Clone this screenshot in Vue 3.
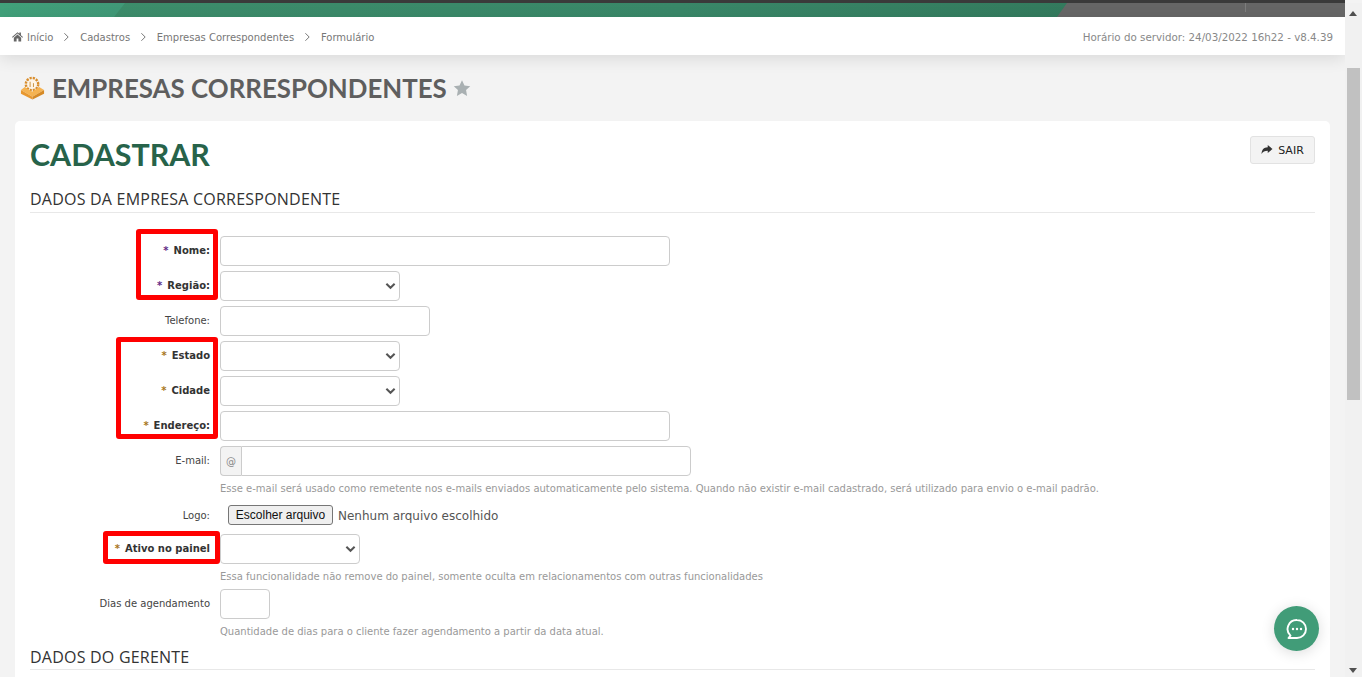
<script setup>
const fields1 = [
  { label: 'Nome:', req: true, star: '#5f2a86', type: 'text', w: 450 },
  { label: 'Região:', req: true, star: '#5f2a86', type: 'select', w: 180 },
  { label: 'Telefone:', type: 'text', w: 210 },
  { label: 'Estado', req: true, star: '#a87520', type: 'select', w: 180 },
  { label: 'Cidade', req: true, star: '#a87520', type: 'select', w: 180 },
  { label: 'Endereço:', req: true, star: '#a87520', type: 'text', w: 450 }
]
const crumbs = ['Cadastros', 'Empresas Correspondentes', 'Formulário']
</script>

<template>
  <div class="shell">
    <div class="main">
      <div class="topbar">
        <div class="band">
          <span class="seg-light"></span>
          <span class="seg-gray"><i class="tick"></i></span>
        </div>
      </div>
      <nav class="crumbbar">
        <div class="crumbs">
          <svg class="home" viewBox="0 0 24 24"><path d="M12 2.500 0 13l1.500 1.700L12 5.500l10.500 9.200L24 13l-4.500-3.900V3.500h-3.500v2.600zM4 14.500V23h6v-6.500h4V23h6v-8.500L12 7.800z" /></svg>
          <span>Início</span>
          <template v-for="c in crumbs" :key="c">
            <svg class="chev" viewBox="0 0 8 12"><path d="M1.500 1.500 6 6l-4.500 4.500" /></svg>
            <span>{{ c }}</span>
          </template>
        </div>
        <div class="server">Horário do servidor: 24/03/2022 16h22 - v8.4.39</div>
      </nav>

      <header class="pagehead">
        <svg class="logo" viewBox="0 0 26 24">
          <circle cx="12.500" cy="8" r="6.300" fill="none" stroke="#d98d2b" stroke-width="2.800" stroke-dasharray="2.200 1.100" />
          <circle cx="12.500" cy="8" r="5" fill="#fff5e6" />
          <path d="M10.500 5.500V11M14 7v4" stroke="#c9923f" stroke-width="1" fill="none" />
          <path fill="#f5b352" d="M1 14 5 11 12.500 16 20 11 25 14 13 21z" />
          <path fill="#e8982f" d="M1 14v4l12 6v-3z" />
          <path fill="#d68a26" d="M25 14v4l-12 6v-3z" />
        </svg>
        <h1>EMPRESAS CORRESPONDENTES</h1>
        <svg class="star" viewBox="0 0 24 24"><path d="m12 1.500 3.300 7 7.700 1-5.600 5.300 1.400 7.700-6.800-3.700-6.800 3.700 1.400-7.700L1 9.500l7.700-1z" /></svg>
      </header>

      <section class="card">
        <div class="cardhead">
          <h2>CADASTRAR</h2>
          <button class="exit" type="button">
            <svg viewBox="0 0 24 24"><path d="M23 10 13.500 2v4.600C5.500 6.800 1.500 11.500 1 20c2.700-5 6.500-6.500 12.500-6.500V18z" /></svg>
            SAIR
          </button>
        </div>
        <h3 class="section">DADOS DA EMPRESA CORRESPONDENTE</h3>

        <form class="form">
          <div v-for="f in fields1" :key="f.label" class="row">
            <label :class="{ req: f.req }"><span v-if="f.req" class="ast" :style="{ color: f.star }">* </span>{{ f.label }}</label>
            <div v-if="f.type === 'select'" class="ctl select" :style="{ width: f.w + 'px' }">
              <svg viewBox="0 0 12 8"><path d="M1.500 1.500 6 6l4.500-4.500" /></svg>
            </div>
            <input v-else class="ctl" type="text" :style="{ width: f.w + 'px' }" />
          </div>

          <div class="row email">
            <label>E-mail:</label>
            <div class="group">
              <span class="addon">@</span>
              <input class="ctl" type="text" />
            </div>
          </div>
          <p class="help h1">Esse e-mail será usado como remetente nos e-mails enviados automaticamente pelo sistema. Quando não existir e-mail cadastrado, será utilizado para envio o e-mail padrão.</p>

          <div class="row logo-row">
            <label>Logo:</label>
            <div class="file">
              <button type="button">Escolher arquivo</button>
              <span>Nenhum arquivo escolhido</span>
            </div>
          </div>

          <div class="row active-row">
            <label class="req"><span class="ast amber">* </span>Ativo no painel</label>
            <div class="ctl select w140">
              <svg viewBox="0 0 12 8"><path d="M1.500 1.500 6 6l4.500-4.500" /></svg>
            </div>
          </div>
          <p class="help h2">Essa funcionalidade não remove do painel, somente oculta em relacionamentos com outras funcionalidades</p>

          <div class="row days">
            <label>Dias de agendamento</label>
            <input class="ctl w50" type="text" />
          </div>
          <p class="help h3">Quantidade de dias para o cliente fazer agendamento a partir da data atual.</p>
        </form>

        <h3 class="section second">DADOS DO GERENTE</h3>

        <i class="mark m1"></i>
        <i class="mark m2"></i>
        <i class="mark m3"></i>
      </section>
    </div>

    <aside class="scrollbar">
      <svg class="arrow up" viewBox="0 0 8 5"><path d="M4 0 8 5H0z" /></svg>
      <div class="thumb"></div>
      <svg class="arrow down" viewBox="0 0 8 5"><path d="M4 5 8 0H0z" /></svg>
    </aside>

    <button class="chat" type="button" aria-label="Chat">
      <svg viewBox="0 0 24 24">
        <path d="M12 3a9 9 0 0 1 0 18H3.500l2-2.400A9 9 0 0 1 12 3z" fill="none" stroke="#fff" stroke-width="1.900" stroke-linejoin="round" />
        <circle cx="8" cy="12" r="1.200" fill="#fff" /><circle cx="12" cy="12" r="1.200" fill="#fff" /><circle cx="16" cy="12" r="1.200" fill="#fff" />
      </svg>
    </button>
  </div>
</template>

<style>
html, body { margin: 0; overflow: hidden; background: #f3f3f3; }
</style>

<style scoped>
* { box-sizing: border-box; }
.shell {
  display: flex; width: 1362px; height: 677px; overflow: hidden; position: relative;
  font-family: "DejaVu Sans", Verdana, sans-serif; font-size: 10px; color: #333; background: #f3f3f3;
}
.main { width: 1345px; flex: none; height: 677px; overflow: hidden; }

.topbar { background: #3a3a3a; padding-top: 3px; width: 1362px; }
.band {
  height: 14px; display: flex; justify-content: space-between; position: relative;
  background: linear-gradient(90deg, #3d8d6b 0%, #398768 50%, #2f7055 100%);
}
.seg-light {
  width: 125px; height: 14px; background: linear-gradient(90deg, #41a07a, #409877);
  clip-path: polygon(0 0, 100% 0, 114px 100%, 0 100%);
}
.seg-gray {
  width: 305px; height: 14px; background: #666; position: relative;
  clip-path: polygon(10px 0, 100% 0, 100% 100%, 0 100%);
}
.tick { position: absolute; left: 188px; top: 0; height: 9px; width: 1px; background: #7d7d7d; }

.crumbbar {
  height: 38px; background: #fff; display: flex; align-items: center; justify-content: space-between;
  padding: 2px 12px 0; box-shadow: 0 4px 16px rgba(0,0,0,.10); position: relative;
}
.crumbs { display: flex; align-items: center; color: #777; }
.home { width: 11px; height: 11px; fill: #666; margin-right: 4px; position: relative; top: -1px; }
.chev { width: 7px; height: 10px; fill: none; stroke: #777; stroke-width: 1.200; margin: 0 9.850px; }
.server { color: #888; font-size: 10.300px; }

.pagehead { display: flex; align-items: center; height: 66px; padding-left: 20px; }
.logo { width: 25px; height: 24px; margin-right: 7px; }
.pagehead h1 { margin: 0; font: 700 25.860px "Lato", sans-serif; color: #5e5e5e; }
.star { width: 18px; height: 18px; fill: #a9b0b2; margin-left: 6px; }

.card {
  position: relative; margin-left: 15px; width: 1315px; height: 600px;
  background: #fff; border-radius: 5px; padding: 0 15px;
}
.cardhead { display: flex; justify-content: space-between; height: 63px; padding-top: 15px; }
.cardhead h2 { margin: 0; font: 700 30.400px/36px "Lato", sans-serif; color: #27634a; }
.exit {
  height: 28px; width: 65px; background: #f3f3f3; border: 1px solid #e2e2e2; border-radius: 3px;
  display: flex; align-items: center; justify-content: center; gap: 5px; padding: 0;
  font: 11px "DejaVu Sans", sans-serif; color: #222;
}
.exit svg { width: 12px; height: 12px; fill: #333; }
.section {
  margin: 0; height: 29px; font: 400 16px/30px "Open Sans", sans-serif; letter-spacing: .22px; color: #333;
  border-bottom: 1px solid #e8e8e8;
}
.form { padding-top: 23px; }
.row { display: flex; align-items: center; height: 30px; margin-bottom: 5px; }
.row label { width: 180px; flex: none; margin-right: 10px; text-align: right; color: #444; position: relative; top: -1px; }
.row label.req { font-weight: 700; color: #333; }
.ast { font-weight: 700; margin-right: 1.500px; }
.amber { color: #a87520; }
.ctl { height: 30px; border: 1px solid #ccc; border-radius: 4px; background: #fff; padding: 0 6px; outline: none; display: block; }
.w140 { width: 140px; }
.w50 { width: 50px; }
.select { display: flex; align-items: center; justify-content: flex-end; padding-right: 3px; }
.select svg { width: 11px; height: 8px; fill: none; stroke: #555; stroke-width: 2.200; }
.group { display: flex; width: 471px; }
.addon {
  width: 21px; height: 30px; background: #f3f3f3; border: 1px solid #ccc; border-right: 0;
  border-radius: 4px 0 0 4px; color: #888; display: flex; align-items: center; justify-content: center;
}
.group .ctl { flex: 1; border-radius: 0 4px 4px 0; }
.row.email { margin-bottom: 0; }
.help { margin: 0 0 0 190px; color: #999; line-height: 13px; font-size: 10px; }
.h1 { padding-top: 6px; height: 29px; }
.row.logo-row { height: 20px; margin-bottom: 9px; }
.row.logo-row label { top: 0; }
.file { display: flex; align-items: center; margin-left: 8px; }
.file button {
  height: 20px; width: 105px; border: 1px solid #767676; border-radius: 3px; background: #efefef; color: #111;
  font: 12px "Liberation Sans", Arial, sans-serif; padding: 0; margin-right: 5px;
}
.file span { font-size: 12px; color: #555; position: relative; top: 1px; }
.row.active-row { margin-bottom: 0; }
.h2 { padding-top: 6px; height: 25px; }
.row.days { margin-bottom: 0; }
.h3 { padding-top: 6px; height: 25px; }
.second { margin-top: 0; height: 26px; line-height: 26px; }

.mark { position: absolute; border: 5px solid #f00; border-radius: 3px; display: block; }
.m1 { left: 121px; top: 108px; width: 82px; height: 71px; }
.m2 { left: 101px; top: 216px; width: 102px; height: 102px; }
.m3 { left: 88px; top: 410px; width: 117px; height: 33px; }

.scrollbar {
  width: 17px; flex: none; height: 677px; background: #f1f1f1; position: relative; z-index: 2;
  margin-top: 3px;
}
.thumb { position: absolute; top: 65px; left: 2px; width: 13px; height: 332px; background: #c1c1c1; }
.arrow { position: absolute; left: 4px; width: 8px; height: 5px; fill: #505050; }
.up { top: 8px; }
.down { top: 665px; }

.chat {
  position: absolute; left: 1274px; top: 606px; width: 45px; height: 45px; border-radius: 50%;
  background: #419c78; border: 0; padding: 0; display: flex; align-items: center; justify-content: center;
  box-shadow: 0 2px 14px rgba(0,0,0,.14);
}
.chat svg { width: 24px; height: 24px; }
</style>
